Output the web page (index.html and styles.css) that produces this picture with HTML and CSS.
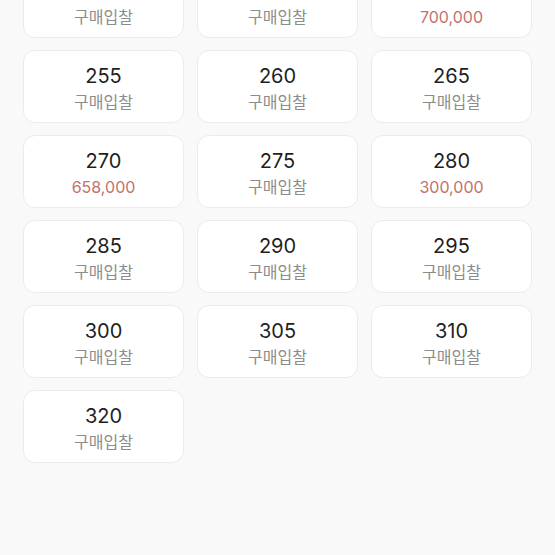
FILE: index.html
```html
<!DOCTYPE html>
<html lang="ko">
<head>
  <meta charset="UTF-8" />
  <meta name="viewport" content="width=device-width, initial-scale=1.0" />
  <title>사이즈 선택</title>
  <link rel="stylesheet" href="styles.css">
</head>
<body>
  <div class="size-grid">
    <div class="size-card"><span class="size">240</span><span class="price">구매입찰</span></div>
    <div class="size-card"><span class="size">245</span><span class="price">구매입찰</span></div>
    <div class="size-card"><span class="size">250</span><span class="price has-price">700,000</span></div>

    <div class="size-card"><span class="size">255</span><span class="price">구매입찰</span></div>
    <div class="size-card"><span class="size">260</span><span class="price">구매입찰</span></div>
    <div class="size-card"><span class="size">265</span><span class="price">구매입찰</span></div>

    <div class="size-card"><span class="size">270</span><span class="price has-price">658,000</span></div>
    <div class="size-card"><span class="size">275</span><span class="price">구매입찰</span></div>
    <div class="size-card"><span class="size">280</span><span class="price has-price">300,000</span></div>

    <div class="size-card"><span class="size">285</span><span class="price">구매입찰</span></div>
    <div class="size-card"><span class="size">290</span><span class="price">구매입찰</span></div>
    <div class="size-card"><span class="size">295</span><span class="price">구매입찰</span></div>

    <div class="size-card"><span class="size">300</span><span class="price">구매입찰</span></div>
    <div class="size-card"><span class="size">305</span><span class="price">구매입찰</span></div>
    <div class="size-card"><span class="size">310</span><span class="price">구매입찰</span></div>

    <div class="size-card"><span class="size">320</span><span class="price">구매입찰</span></div>
  </div>
</body>
</html>
```

FILE: styles.css
```css
html, body {
  margin: 0;
  padding: 0;
}
body {
  font-family: 'Inter', 'Noto Sans CJK KR', sans-serif;
  background: #f9f9f9;
  min-height: 100vh;
  overflow: hidden;
}
.size-grid {
  display: grid;
  grid-template-columns: repeat(3, 161px);
  column-gap: 13px;
  row-gap: 12px;
  padding: 0 23px;
  margin-top: -35px;
}
.size-card {
  box-sizing: border-box;
  height: 73px;
  background: #fff;
  border: 1px solid #ebebeb;
  border-radius: 12px;
  display: flex;
  flex-direction: column;
  align-items: center;
  justify-content: center;
  padding-top: 5px;
}
.size {
  font-size: 20px;
  line-height: 26px;
  color: #1f1f1f;
}
.price {
  font-size: 16px;
  line-height: 26px;
  color: #8c8c8c;
}
.price.has-price {
  color: #c4716d;
}
```
